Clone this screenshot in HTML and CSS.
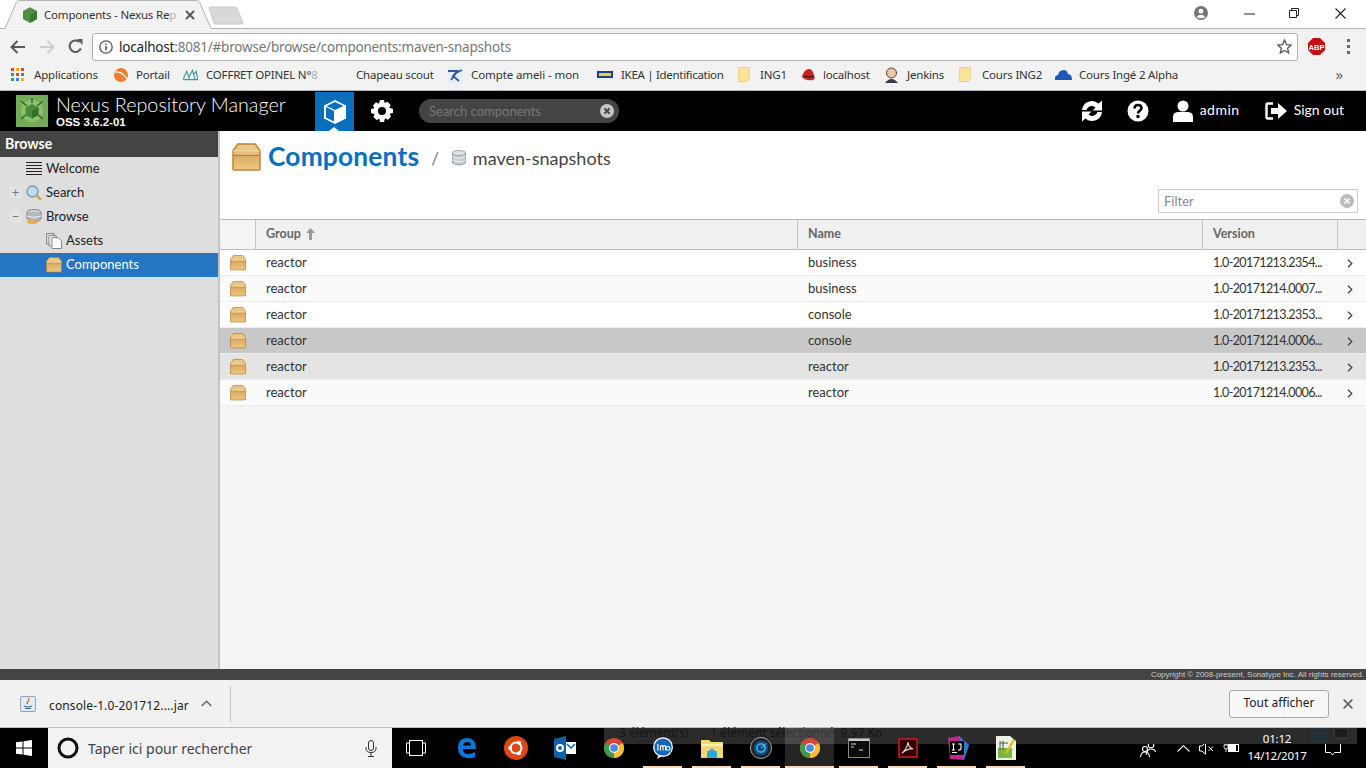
FILE: index.html
```html
<!DOCTYPE html>
<html lang="fr">
<head>
    <meta charset="UTF-8">
    <title>Components - Nexus Repository Manager</title>
    <link rel="stylesheet" href="styles.css">
</head>
<body>
    <svg class="defs" width="0" height="0">
        <defs>
            <linearGradient id="box-body" x1="0" y1="0" x2="0" y2="1">
                <stop offset="0" stop-color="#dcae68"/>
                <stop offset="1" stop-color="#eec57f"/>
            </linearGradient>
            <linearGradient id="box-lid" x1="0" y1="0" x2="0" y2="1">
                <stop offset="0" stop-color="#edcb8e"/>
                <stop offset="1" stop-color="#d9a963"/>
            </linearGradient>
        </defs>
        <symbol id="box" viewBox="0 0 30 30">
            <path d="M1 8 L6 1 H24 L29 8 V27 a1 1 0 0 1 -1 1 H2 a1 1 0 0 1 -1 -1 Z" fill="url(#box-lid)" stroke="#b97f37" stroke-width="1.400"/>
            <path d="M1.500 8 H28.500" stroke="#f3d9a6" stroke-width="1.200"/>
            <path d="M1.500 13 H28.500" stroke="#b97f37" stroke-width="1.500"/>
            <path d="M2 14 H28 V27 H2 Z" fill="url(#box-body)"/>
        </symbol>
        <symbol id="close-dot" viewBox="0 0 16 16">
            <circle cx="8" cy="8" r="8" style="fill: var(--dot, #c8c8c8)"/>
            <path d="M5 5 L11 11 M11 5 L5 11" stroke="currentColor" stroke-width="2.400"/>
        </symbol>
        <symbol id="chrome" viewBox="0 0 24 24">
            <circle cx="12" cy="12" r="11" fill="#db4437"/>
            <path d="M12 12 L21.500 6.500 A11 11 0 0 1 12 23 Z" fill="#fbc02d"/>
            <path d="M12 12 L12 23 A11 11 0 0 1 2.500 6.500 Z" fill="#3f9b4c"/>
            <circle cx="12" cy="12" r="5.400" fill="#fff"/>
            <circle cx="12" cy="12" r="4.200" fill="#4a86e8"/>
        </symbol>
        <symbol id="folder" viewBox="0 0 14 18">
            <path d="M.5 .5 H13.500 V14 L10.500 17.500 H.5 Z" fill="#fce49a" stroke="#efc755"/>
        </symbol>
        <symbol id="chev" viewBox="0 0 6 9">
            <path d="M1 .8 L4.800 4.500 L1 8.200" fill="none" stroke="#444" stroke-width="1.300"/>
        </symbol>
    </svg>

    <div class="tabstrip">
        <svg class="tab-shape" width="250" height="29" viewBox="0 0 250 29">
            <path d="M209 8 Q209 7 210 7 H235 Q236 7 237 8 L243 23 Q243 24 242 24 H215 Q214 24 214 23 Z" fill="#d8d8d8" stroke="#cacaca"/>
            <path d="M0 28.500 H5 L16.500 2 Q17.500 .5 19.500 .5 H196.500 Q198.500 .5 199.500 2 L211 28.500 H250" fill="#f2f2f2" stroke="#b4b4b4"/>
        </svg>
        <div class="tab">
            <svg width="14" height="16" viewBox="0 0 16 18"><path d="M8 0 L16 4.500 V13.500 L8 18 L0 13.500 V4.500 Z" fill="#4f8f3f"/><path d="M8 9 L16 4.500 V13.500 L8 18 Z" fill="#3c7a30"/></svg>
            <span class="tab-title">Components - Nexus Re<span class="fade">p</span></span>
            <svg class="tab-x" width="10" height="10" viewBox="0 0 10 10"><path d="M1 1 L9 9 M9 1 L1 9" stroke="#555" stroke-width="1.800"/></svg>
        </div>
        <div class="win-controls">
            <svg class="win-user" width="14" height="14" viewBox="0 0 14 14"><circle cx="7" cy="7" r="7" fill="#757575"/><circle cx="7" cy="5.200" r="2.400" fill="#fff"/><path d="M2.500 11 Q7 6.500 11.500 11 Q7 13.500 2.500 11" fill="#fff"/></svg>
            <svg class="win-min" width="11" height="11" viewBox="0 0 11 11"><path d="M0 6 H11" stroke="#222"/></svg>
            <svg class="win-max" width="10" height="10" viewBox="0 0 10 10"><path d="M.5 2.500 H7.500 V9.500 H.5 Z M2.500 2.500 V.5 H9.500 V7.500 H7.500" fill="none" stroke="#222"/></svg>
            <svg class="win-close" width="11" height="11" viewBox="0 0 11 11"><path d="M.5 .5 L10.500 10.500 M10.500 .5 L.5 10.500" stroke="#222" stroke-width="1.100"/></svg>
        </div>
    </div>

    <div class="toolbar">
        <svg class="nav" width="16" height="14" viewBox="0 0 16 14"><path d="M15 7 H2 M7.500 1 L1.500 7 L7.500 13" fill="none" stroke="#5a5a5a" stroke-width="2"/></svg>
        <svg class="nav" width="16" height="14" viewBox="0 0 16 14"><path d="M1 7 H14 M8.500 1 L14.500 7 L8.500 13" fill="none" stroke="#cdcdcd" stroke-width="2"/></svg>
        <svg class="nav" width="15" height="15" viewBox="0 0 15 15"><path d="M12.800 9.500 A5.800 5.800 0 1 1 11.500 3" fill="none" stroke="#5a5a5a" stroke-width="2"/><path d="M9 0 H14.500 V6 Z" fill="#5a5a5a"/></svg>
        <div class="omnibox">
            <svg width="14" height="14" viewBox="0 0 14 14"><circle cx="7" cy="7" r="6.200" fill="none" stroke="#555" stroke-width="1.300"/><path d="M7 6 V10.500 M7 3.500 V5" stroke="#555" stroke-width="1.500"/></svg>
            <span class="url"><b>localhost</b>:8081/#browse/browse/components:maven-snapshots</span>
            <svg class="star" width="15" height="15" viewBox="0 0 15 15"><path d="M7.500 1 L9.400 5.600 L14.300 6 L10.600 9.200 L11.700 14 L7.500 11.500 L3.300 14 L4.400 9.200 L.7 6 L5.600 5.600 Z" fill="none" stroke="#555" stroke-width="1.300"/></svg>
        </div>
        <svg class="abp" width="17" height="17" viewBox="0 0 17 17"><path d="M5 0 H12 L17 5 V12 L12 17 H5 L0 12 V5 Z" fill="#c70d0d"/><text x="8.500" y="11.500" text-anchor="middle" class="abp-text">ABP</text></svg>
        <span class="dots"><i></i><i></i><i></i></span>
    </div>

    <div class="bookmarks">
        <span class="apps-grid">
            <i class="r"></i><i class="y"></i><i class="r"></i>
            <i class="b"></i><i class="r"></i><i class="g"></i>
            <i class="g"></i><i class="b"></i><i class="y"></i>
        </span>
        <span class="bm bm-apps">Applications</span>
        <svg width="14" height="14" viewBox="0 0 14 14"><circle cx="7" cy="7" r="7" fill="#ee7d2e"/><path d="M1 4 Q8 3 13 11" fill="none" stroke="#fff" stroke-width="1.300"/></svg>
        <span class="bm bm-portail">Portail</span>
        <svg width="15" height="13" viewBox="0 0 16 13"><path d="M0 12 L4 3 L7 12 M6 10 L10 2 L13 12 M11 7 L14 3 L16 12 M1 12 H16" fill="none" stroke="#3f9a94" stroke-width="1.200"/></svg>
        <span class="bm bm-opinel">COFFRET OPINEL N°<span class="fade">8</span></span>
        <span class="bm bm-scout">Chapeau scout</span>
        <svg width="16" height="16" viewBox="0 0 16 16"><rect width="16" height="16" fill="#e6eef7"/><path d="M1 4 H10 L6 9 L12 14 M4 13 L9 6 L15 3" fill="none" stroke="#2a5f9c" stroke-width="1.800"/></svg>
        <span class="bm bm-ameli">Compte ameli - mon</span>
        <svg width="16" height="7" viewBox="0 0 16 7"><rect width="16" height="7" fill="#1c3f94"/><rect x="2" y="2" width="12" height="3" fill="#f5d21f"/></svg>
        <span class="bm bm-ikea">IKEA | Identification</span>
        <svg width="12" height="15" viewBox="0 0 14 18"><use href="#folder"/></svg>
        <span class="bm bm-ing1">ING1</span>
        <svg width="15" height="14" viewBox="0 0 15 14"><path d="M1 9 Q3 1 8 1 Q12 1 13 8 Q15 10 12 12 Q5 13 1 9" fill="#cc1f1f"/><path d="M3 8 Q8 10 13 8" stroke="#111" fill="none"/></svg>
        <span class="bm bm-local">localhost</span>
        <svg width="15" height="16" viewBox="0 0 15 16"><circle cx="7.500" cy="6" r="5" fill="#e8c8a8" stroke="#5a4030"/><path d="M1 16 Q7.500 8 14 16 Z" fill="#3a3a4a"/></svg>
        <span class="bm bm-jenkins">Jenkins</span>
        <svg width="12" height="15" viewBox="0 0 14 18"><use href="#folder"/></svg>
        <span class="bm bm-ing2">Cours ING2</span>
        <svg width="17" height="11" viewBox="0 0 17 11"><path d="M0 11 Q-1 7 3 6 Q4 1 9 1 Q12 1 13 5 Q17 5 17 11 Z" fill="#1d58b8"/></svg>
        <span class="bm bm-alpha">Cours Ingé 2 Alpha</span>
        <span class="more">»</span>
    </div>

    <header class="app-header">
        <div class="logo">
            <svg width="32" height="32" viewBox="0 0 32 32"><rect width="32" height="32" fill="#74ad58"/><circle cx="16" cy="16" r="11" fill="#8cc06f"/><path d="M5 6 L11 11 M27 6 L21 11 M5 24 L10 20 M27 24 L22 20 M16 3 V8" stroke="#3f5a36" stroke-width="1.300"/><path d="M16 9 L22.500 12.500 V20 L16 23.500 L9.500 20 V12.500 Z" fill="#4a8a3a"/><path d="M16 16 L22.500 12.500 V20 L16 23.500 Z" fill="#336d2a"/></svg>
        </div>
        <div class="brand">
            <div class="brand-name">Nexus Repository Manager</div>
            <div class="brand-version">OSS 3.6.2-01</div>
        </div>
        <div class="mode-browse">
            <svg width="24" height="26" viewBox="0 0 24 26"><path d="M12 1 L23 6.500 V19.500 L12 25 L1 19.500 V6.500 Z" fill="#fff"/><path d="M3 8 L11 12 V22.500 L3 18.500 Z" fill="#0a6ebd"/><path d="M12 3 L20.500 7 L12 11 L3.500 7 Z" fill="#0a6ebd"/></svg>
            <span class="caret"></span>
        </div>
        <svg class="gear" width="22" height="22" viewBox="0 0 22 22"><path d="M9 0 H13 L13.700 3 L16.500 1.800 L19.700 5 L18.300 7.700 L22 9 V13 L18.700 13.700 L20 16.500 L17 19.700 L14 18.300 L13 22 H9 L8.300 18.700 L5.500 20 L2.300 17 L3.700 14.300 L0 13 V9 L3.300 8.300 L2 5.500 L5 2.300 L8 3.700 Z" fill="#fff"/><circle cx="11" cy="11" r="4" fill="#000"/></svg>
        <div class="app-search">
            <span>Search components</span>
            <svg width="14" height="14"><use href="#close-dot"/></svg>
        </div>
        <div class="header-right">
            <svg width="22" height="22" viewBox="0 0 22 22"><path d="M1 10 A10 10 0 0 1 17.500 3.500 L21 0.500 V10.500 H11.500 L14.500 7.500 A5.500 5.500 0 0 0 5.500 10 Z M21 12 A10 10 0 0 1 4.500 18.500 L1 21.500 V11.500 H10.500 L7.500 14.500 A5.500 5.500 0 0 0 16.500 12 Z" fill="#fff"/></svg>
            <svg class="help" width="22" height="22" viewBox="0 0 22 22"><circle cx="11" cy="11" r="10.500" fill="#fff"/><path d="M7.500 8.500 Q7.500 5 11 5 Q14.500 5 14.500 8 Q14.500 10 12.500 11 Q11 12 11 13.500" fill="none" stroke="#000" stroke-width="2.600"/><rect x="9.500" y="15" width="3" height="3" fill="#000"/></svg>
            <svg class="user" width="20" height="22" viewBox="0 0 20 22"><circle cx="10" cy="6" r="5.500" fill="#fff"/><path d="M0 22 V17 Q0 12 6 12 H14 Q20 12 20 17 V22 Z" fill="#fff"/></svg>
            <span class="admin">admin</span>
            <svg class="signout" width="22" height="18" viewBox="0 0 22 18"><path d="M8 1.500 H3 Q1.500 1.500 1.500 3 V15 Q1.500 16.500 3 16.500 H8" fill="none" stroke="#fff" stroke-width="2.400"/><path d="M6 6 H13 V1 L22 9 L13 17 V12 H6 Z" fill="#fff"/></svg>
            <span class="signout-text">Sign out</span>
        </div>
    </header>

    <div class="app-body">
        <aside class="sidebar">
            <div class="side-title">Browse</div>
            <div class="tree-row">
                <svg class="tree-ico" width="16" height="16" viewBox="0 0 16 16"><path d="M0 1.500 H16 M0 4.500 H16 M0 7.500 H16 M0 10.500 H16 M0 13.500 H16" stroke="#222"/></svg>
                <span>Welcome</span>
            </div>
            <div class="tree-row">
                <span class="expander">+</span>
                <svg class="tree-ico" width="16" height="16" viewBox="0 0 16 16"><circle cx="6.500" cy="6.500" r="5.500" fill="#bcdcf2" stroke="#7d93a6" stroke-width="1.300"/><path d="M10.500 10.500 L15 15" stroke="#d9a441" stroke-width="2.500"/></svg>
                <span>Search</span>
            </div>
            <div class="tree-row">
                <span class="expander">−</span>
                <svg class="tree-ico" width="16" height="16" viewBox="0 0 16 16"><ellipse cx="8" cy="3" rx="7" ry="2.500" fill="#cfd3d6" stroke="#888"/><path d="M1 3 V10 Q8 14 15 10 V3" fill="#b4b9bd" stroke="#888"/><path d="M1 7 Q8 10 15 7" fill="none" stroke="#eee"/><path d="M0 13 Q5 9 10 12 L15 11 Q10 16 4 15 Z" fill="#e5ad4b"/></svg>
                <span>Browse</span>
            </div>
            <div class="tree-row child">
                <svg class="tree-ico" width="16" height="16" viewBox="0 0 16 16"><path d="M.5 .5 H8 V11 H.5 Z" fill="#ddd" stroke="#888"/><path d="M3 2.500 H10 V13 H3 Z" fill="#eee" stroke="#888"/><path d="M6 4.500 H12 L15.500 8 V15.500 H6 Z" fill="#fff" stroke="#888"/></svg>
                <span>Assets</span>
            </div>
            <div class="tree-row child selected">
                <svg class="tree-ico" width="16" height="16"><use href="#box"/></svg>
                <span>Components</span>
            </div>
        </aside>
        <main class="content">
            <div class="content-head">
                <div class="crumb">
                    <svg class="crumb-box" width="29" height="29"><use href="#box"/></svg>
                    <h1>Components</h1>
                    <span class="slash">/</span>
                    <svg class="crumb-db" width="14" height="16" viewBox="0 0 14 16"><path d="M.5 3 V13 Q7 17 13.500 13 V3" fill="#c3cbd1" stroke="#9aa3aa"/><ellipse cx="7" cy="3" rx="6.500" ry="2.500" fill="#dfe4e7" stroke="#9aa3aa"/><path d="M.5 6.500 Q7 10 13.500 6.500 M.5 10 Q7 13.500 13.500 10" fill="none" stroke="#f2f4f5"/></svg>
                    <span class="repo">maven-snapshots</span>
                </div>
                <div class="filter-line">
                    <div class="filter">
                        <span>Filter</span>
                        <svg width="14" height="14"><use href="#close-dot"/></svg>
                    </div>
                </div>
            </div>
            <div class="grid-head">
                <div></div>
                <div>Group <svg width="9" height="12" viewBox="0 0 9 12"><path d="M4.500 0 L9 5 H6 V12 H3 V5 H0 Z" fill="#999"/></svg></div>
                <div>Name</div>
                <div>Version</div>
                <div></div>
            </div>
            <div class="grid-row">
                <svg class="row-box" width="16" height="16"><use href="#box"/></svg>
                <span>reactor</span><span>business</span><span class="ver">1.0-20171213.2354...</span><svg class="chev" width="6" height="9"><use href="#chev"/></svg>
            </div>
            <div class="grid-row alt">
                <svg class="row-box" width="16" height="16"><use href="#box"/></svg>
                <span>reactor</span><span>business</span><span class="ver">1.0-20171214.0007...</span><svg class="chev" width="6" height="9"><use href="#chev"/></svg>
            </div>
            <div class="grid-row">
                <svg class="row-box" width="16" height="16"><use href="#box"/></svg>
                <span>reactor</span><span>console</span><span class="ver">1.0-20171213.2353...</span><svg class="chev" width="6" height="9"><use href="#chev"/></svg>
            </div>
            <div class="grid-row active">
                <svg class="row-box" width="16" height="16"><use href="#box"/></svg>
                <span>reactor</span><span>console</span><span class="ver">1.0-20171214.0006...</span><svg class="chev" width="6" height="9"><use href="#chev"/></svg>
            </div>
            <div class="grid-row hover">
                <svg class="row-box" width="16" height="16"><use href="#box"/></svg>
                <span>reactor</span><span>reactor</span><span class="ver">1.0-20171213.2353...</span><svg class="chev" width="6" height="9"><use href="#chev"/></svg>
            </div>
            <div class="grid-row alt">
                <svg class="row-box" width="16" height="16"><use href="#box"/></svg>
                <span>reactor</span><span>reactor</span><span class="ver">1.0-20171214.0006...</span><svg class="chev" width="6" height="9"><use href="#chev"/></svg>
            </div>
        </main>
    </div>

    <div class="app-footer">Copyright © 2008-present, Sonatype Inc. All rights reserved.</div>

    <div class="downloads">
        <div class="dl-item">
            <svg width="16" height="16" viewBox="0 0 16 16"><rect x=".5" y=".5" width="15" height="15" rx="1" fill="#e4ebf5" stroke="#8fa3bd"/><path d="M8 2 Q10 4 7.500 6 Q6.500 7 8 8" fill="none" stroke="#d9661f" stroke-width="1.300"/><path d="M4 10 Q8 12 12 10 M5 12.500 H11" fill="none" stroke="#3d6a9e" stroke-width="1.200"/></svg>
            <span class="dl-name">console-1.0-201712....jar</span>
            <svg width="11" height="7" viewBox="0 0 11 7"><path d="M.7 6 L5.500 1.300 L10.300 6" fill="none" stroke="#666" stroke-width="1.600"/></svg>
        </div>
        <button class="show-all">Tout afficher</button>
        <svg class="dl-close" width="10" height="10" viewBox="0 0 10 10"><path d="M.7 .7 L9.300 9.300 M9.300 .7 L.7 9.300" stroke="#666" stroke-width="1.800"/></svg>
    </div>

    <div class="taskbar">
        <div class="explorer-strip">
            <span>3 élément(s)</span><span>1 élément sélectionné  9,97 Ko</span>
            <svg class="strip-views" width="38" height="16" viewBox="0 0 38 16"><path d="M1 1 H6 M8 1 H19 M1 5 H6 M8 5 H19 M1 9 H6 M8 9 H19 M1 13 H6 M8 13 H19" stroke="#1e3a4a" stroke-width="1.500"/><rect x="24" y="0" width="14" height="10" fill="#1c1c1c" stroke="#444"/></svg>
        </div>
        <div class="start">
            <svg width="16" height="16" viewBox="0 0 16 16"><path d="M0 2.300 L6.500 1.400 V7.500 H0 Z M7.500 1.200 L16 0 V7.500 H7.500 Z M0 8.500 H6.500 V14.600 L0 13.700 Z M7.500 8.500 H16 V16 L7.500 14.800 Z" fill="#fff"/></svg>
        </div>
        <div class="cortana">
            <svg width="22" height="22" viewBox="0 0 22 22"><circle cx="11" cy="11" r="9" fill="none" stroke="#111" stroke-width="3"/></svg>
            <span>Taper ici pour rechercher</span>
            <svg class="mic" width="12" height="17" viewBox="0 0 12 17"><rect x="3.500" y=".5" width="5" height="10" rx="2.500" fill="none" stroke="#333"/><path d="M1 7 V8.500 Q1 12.500 6 12.500 Q11 12.500 11 8.500 V7 M6 12.500 V16 M3 16.500 H9" fill="none" stroke="#333"/></svg>
        </div>
        <div class="task-icons">
            <div class="task task-view"><svg width="20" height="16" viewBox="0 0 20 16"><path d="M.5 3 H3 M.5 13 H3 M17 3 H19.500 M17 13 H19.500 M.5 3 V13 M19.500 3 V13" stroke="#fff" fill="none"/><rect x="3.500" y=".5" width="13" height="15" fill="none" stroke="#fff"/></svg></div>
            <div class="task"><svg width="20" height="22" viewBox="0 0 20 22"><path d="M1 11 Q1 1 10 1 Q19 1 19 12 H6 Q6 17 11 17 Q15 17 18 15 V20 Q14 22 10 21 Q1 20 1 11 Z M6 8.500 H14 Q14 5 10 5 Q7 5 6 8.500 Z" fill="#0a78d7"/></svg></div>
            <div class="task"><svg width="24" height="24" viewBox="0 0 24 24"><circle cx="12" cy="12" r="12" fill="#dd4814"/><circle cx="12" cy="12" r="5.500" fill="none" stroke="#fff" stroke-width="2"/><circle cx="6" cy="12" r="2" fill="#fff"/><circle cx="15" cy="6.800" r="2" fill="#fff"/><circle cx="15" cy="17.200" r="2" fill="#fff"/></svg></div>
            <div class="task"><svg width="22" height="24" viewBox="0 0 22 24"><path d="M0 3 L12 0 V24 L0 21 Z" fill="#0a64ad"/><rect x="12" y="6" width="10" height="12" fill="#fff"/><path d="M13 8 L17 12 L21 8" fill="none" stroke="#0a64ad" stroke-width="1.500"/><circle cx="6" cy="12" r="3" fill="none" stroke="#fff" stroke-width="2"/></svg></div>
            <div class="task"><svg width="22" height="22"><use href="#chrome"/></svg></div>
            <div class="task run"><svg width="22" height="22" viewBox="0 0 24 26"><circle cx="12" cy="12" r="11" fill="#1565b8" stroke="#fff" stroke-width="1.500"/><path d="M7 21 L5 26 L12 22 Z" fill="#fff"/><path d="M6 8 V16 M9 16 V11 Q11 9.500 12 11 V16 M12 11 Q14 9.500 15 11 V16" fill="none" stroke="#fff" stroke-width="1.300"/><circle cx="18" cy="13.500" r="2.200" fill="none" stroke="#fff" stroke-width="1.300"/></svg></div>
            <div class="task run"><svg width="22" height="20" viewBox="0 0 22 20"><path d="M0 2 H8 L10 4 H22 V20 H0 Z" fill="#f7d774"/><path d="M0 6 H22 V8 H0 Z" fill="#fff2bf"/><path d="M6 20 V13 H8 L11 10 L14 13 H16 V20 Z" fill="#2fa5d8"/></svg></div>
            <div class="task run"><svg width="22" height="22" viewBox="0 0 24 24"><circle cx="12" cy="12" r="11.500" fill="#222" stroke="#9fb2c2"/><circle cx="12" cy="12" r="8" fill="#0f4d80"/><circle cx="12" cy="12" r="4.500" fill="none" stroke="#39a6e6" stroke-width="2"/><path d="M12 12 L18 7" stroke="#8ed0f5"/></svg></div>
            <div class="task run current"><svg width="22" height="22"><use href="#chrome"/></svg></div>
            <div class="task run"><svg width="22" height="20" viewBox="0 0 22 20"><rect x=".5" y=".5" width="21" height="19" fill="#0c0c0c" stroke="#8a8a8a"/><rect x="1" y="1" width="20" height="2" fill="#ccc"/><path d="M3 6 H8 M3 9 H6 M11 12 H15" stroke="#ddd"/></svg></div>
            <div class="task run"><svg width="20" height="20" viewBox="0 0 20 20"><rect x="1" y="1" width="18" height="18" fill="#2b0505" stroke="#c91a12" stroke-width="1.600"/><path d="M4 15 Q9 11 10 4 Q10 9 15 11 Q10 10 4 15" fill="none" stroke="#f0d0d0" stroke-width="1.200"/></svg></div>
            <div class="task run"><svg width="24" height="24" viewBox="0 0 24 24"><path d="M3 2 L14 0 L24 9 L19 24 L5 23 Z" fill="#c2268b"/><path d="M14 0 L24 9 L19 24 L15 12 Z" fill="#2a7ad4"/><rect x="5" y="5" width="14" height="14" fill="#000"/><path d="M7 8 H10 M8.500 8 V14 M7 14 H10 M13 8 H16 V13 Q16 14 13 14 M7 16.500 H12" fill="none" stroke="#fff" stroke-width="1.100"/></svg></div>
            <div class="task run"><svg width="20" height="24" viewBox="0 0 20 24"><path d="M0 0 H14 L20 5 V24 H0 Z" fill="#eaf3df"/><rect x="2" y="12" width="14" height="10" fill="#7ab648"/><path d="M4 5 V14 M7 5 V14 M4 7 H12" stroke="#555"/><path d="M9 17 L17 3 L19 4 L11 18 Z" fill="#e8b820"/></svg></div>
        </div>
        <div class="tray">
            <svg class="tray-people" width="16" height="16" viewBox="0 0 16 16"><circle cx="11" cy="4" r="2.800" fill="none" stroke="#fff" stroke-width="1.100"/><path d="M6 14 Q7 8 11 8 Q15 8 15.500 11" fill="none" stroke="#fff" stroke-width="1.100"/><circle cx="5" cy="8" r="2.500" fill="#000" stroke="#fff" stroke-width="1.100"/><path d="M.5 16 Q1 11 5 11 Q9 11 9.500 16" fill="none" stroke="#fff" stroke-width="1.100"/></svg>
            <svg class="tray-up" width="13" height="7" viewBox="0 0 13 7"><path d="M.5 6.500 L6.500 .7 L12.500 6.500" fill="none" stroke="#fff" stroke-width="1.100"/></svg>
            <svg class="tray-vol" width="15" height="13" viewBox="0 0 15 13"><path d="M.5 4 H3 L6.500 .7 V12.300 L3 9 H.5 Z" fill="none" stroke="#fff"/><path d="M9.500 4.500 L14 9 M14 4.500 L9.500 9" stroke="#fff"/></svg>
            <svg class="tray-bat" width="16" height="12" viewBox="0 0 16 12"><path d="M2 0 V3 M4 0 V3 M1 3 H5 V5 Q5 7 3 7 Q1 7 1 5 Z M3 7 V10" fill="none" stroke="#fff" stroke-width=".9"/><rect x="5.500" y="2.500" width="10" height="7" fill="#000" stroke="#fff"/><rect x="6" y="3" width="7" height="6" fill="#fff"/></svg>
            <div class="clock"><div>01:12</div><div>14/12/2017</div></div>
            <svg class="tray-msg" width="16" height="16" viewBox="0 0 16 16"><path d="M.5 .5 H15.500 V12.500 H9.500 L7.500 15 L5.500 12.500 H.5 Z" fill="none" stroke="#fff"/></svg>
        </div>
    </div>
</body>
</html>
```
FILE: styles.css
```css
* {
    box-sizing: border-box;
}
html, body {
    margin: 0;
    padding: 0;
    height: 768px;
    overflow: hidden;
}
body {
    width: 1366px;
    display: flex;
    flex-direction: column;
    font-family: "Lato", "Liberation Sans", sans-serif;
    background-color: #f4f4f4;
    color: #333;
}
svg {
    flex: none;
    display: block;
}
.defs {
    position: absolute;
}
.fade {
    opacity: 0.35;
}

/* browser chrome */
.tabstrip {
    position: relative;
    height: 29px;
    flex: none;
    background-color: #fff;
    display: flex;
    font-family: "Noto Sans", sans-serif;
}
.tab-shape {
    position: absolute;
    left: 0;
    top: 0;
}
.tabstrip::after {
    content: "";
    position: absolute;
    left: 250px;
    right: 0;
    top: 28px;
    height: 1px;
    background-color: #b8b8b8;
}
.tab {
    position: relative;
    display: flex;
    align-items: center;
    width: 172px;
    height: 29px;
    margin-left: 23px;
    font-size: 11.500px;
    letter-spacing: -0.2px;
    color: #333;
}
.tab-title {
    margin-left: 7px;
    white-space: nowrap;
}
.tab-x {
    margin-left: auto;
}
.win-controls {
    position: relative;
    margin-left: auto;
    display: flex;
    align-items: center;
    height: 26px;
}
.win-user {
    margin-right: 36px;
}
.win-min {
    margin-right: 34px;
}
.win-max {
    margin-right: 36px;
}
.win-close {
    margin-right: 20px;
}
.toolbar {
    height: 33px;
    flex: none;
    background-color: #f2f2f2;
    display: flex;
    align-items: center;
    padding: 2px 0 0 10px;
}
.nav {
    margin-right: 13px;
}
.omnibox {
    width: 1206px;
    height: 28px;
    margin-left: -4px;
    background-color: #fff;
    border: 1px solid #b0b0b0;
    border-radius: 3px;
    display: flex;
    align-items: center;
    padding: 0 5px 0 6px;
}
.url {
    margin-left: 6px;
    font-family: "Noto Sans", sans-serif;
    font-size: 13.500px;
    letter-spacing: -0.2px;
    color: #777;
}
.url b {
    font-weight: normal;
    color: #222;
}
.star {
    margin-left: auto;
}
.abp {
    margin-left: 10px;
}
.abp-text {
    font: bold 7.500px "Liberation Sans", sans-serif;
    fill: #fff;
}
.dots {
    margin-left: 22px;
    display: flex;
    flex-direction: column;
    gap: 3px;
}
.dots i {
    display: block;
    width: 3px;
    height: 3px;
    background-color: #666;
}
.bookmarks {
    height: 29px;
    flex: none;
    background-color: #f2f2f2;
    border-bottom: 1px solid #b8b8b8;
    display: flex;
    align-items: center;
    padding: 0 0 3px 11px;
    font-family: "Noto Sans", sans-serif;
    font-size: 11.500px;
    letter-spacing: -0.2px;
    color: #333;
    white-space: nowrap;
}
.apps-grid {
    display: grid;
    grid-template-columns: repeat(3, 3px);
    grid-auto-rows: 3px;
    gap: 2px;
}
.apps-grid i {
    display: block;
}
.apps-grid .r { background-color: #e0453a; }
.apps-grid .y { background-color: #f4b400; }
.apps-grid .g { background-color: #2da14f; }
.apps-grid .b { background-color: #3f7fe8; }
.bm {
    display: block;
    flex: none;
}
.bm-apps { margin: 0 15px 0 10px; width: 65px; }
.bm-portail { margin: 0 13px 0 8px; width: 34px; }
.bm-opinel { margin: 0 32px 0 8px; width: 118px; }
.bm-scout { margin: 0 12px 0 0; width: 79px; }
.bm-ameli { margin: 0 16px 0 8px; width: 110px; letter-spacing: -0.1px; }
.bm-ikea { margin: 0 14px 0 8px; width: 103px; letter-spacing: -0.3px; }
.bm-ing1 { margin: 0 14px 0 10px; width: 27px; }
.bm-local { margin: 0 13px 0 7px; width: 48px; }
.bm-jenkins { margin: 0 14px 0 8px; width: 38px; }
.bm-ing2 { margin: 0 12px 0 11px; width: 61px; }
.bm-alpha { margin: 0 0 0 7px; }
.more {
    margin-left: auto;
    margin-right: 23px;
    font-size: 15px;
    line-height: 15px;
    color: #666;
}

/* nexus header */
.app-header {
    height: 40px;
    flex: none;
    background-color: #000;
    display: flex;
    align-items: center;
    padding-left: 16px;
    color: #fff;
}
.brand {
    margin-left: 8px;
    width: 259px;
    padding-top: 2px;
}
.brand-name {
    font-size: 19.800px;
    font-weight: 300;
    line-height: 20px;
    white-space: nowrap;
}
.brand-version {
    font-size: 11.500px;
    font-weight: 700;
    line-height: 16px;
    font-family: "Liberation Sans", sans-serif;
}
.mode-browse {
    position: relative;
    width: 39px;
    height: 39px;
    margin-top: 1px;
    background-color: #0a6ebd;
    display: flex;
    align-items: center;
    justify-content: center;
}
.caret {
    position: absolute;
    left: 14px;
    bottom: 0;
    border-left: 5px solid transparent;
    border-right: 5px solid transparent;
    border-bottom: 4px solid #fff;
}
.gear {
    margin-left: 17px;
}
.app-search {
    width: 200px;
    height: 24px;
    margin-left: 26px;
    background-color: #444;
    border-radius: 12px;
    display: flex;
    align-items: center;
    justify-content: space-between;
    padding: 0 5px 0 10px;
    font-size: 13px;
    color: #777;
}
.app-search svg {
    color: #444;
}
.header-right {
    margin-left: auto;
    display: flex;
    align-items: center;
    padding-right: 22px;
    font-size: 14px;
}
.help {
    margin-left: 24px;
}
.user {
    margin-left: 24px;
}
.admin {
    margin: 0 0 4px 7px;
    font-size: 14px;
    letter-spacing: 0.5px;
}
.signout {
    margin-left: 25px;
}
.signout-text {
    margin: 0 0 4px 7px;
}

/* main area */
.app-body {
    flex: 1;
    min-height: 0;
    display: flex;
}
.sidebar {
    width: 220px;
    flex: none;
    background-color: #dedede;
    border-right: 2px solid #c4c4c4;
}
.side-title {
    height: 26px;
    background-color: #444;
    color: #fff;
    font-weight: 700;
    font-size: 14.200px;
    line-height: 26px;
    padding-left: 5px;
}
.tree-row {
    height: 24px;
    display: flex;
    align-items: center;
    padding-left: 26px;
    font-size: 13px;
    color: #222;
    position: relative;
}
.tree-row span {
    margin-bottom: 2px;
}
.tree-ico {
    margin-right: 4px;
}
.tree-row.child {
    padding-left: 46px;
}
.tree-row.selected {
    background-color: #2475c2;
    color: #fff;
}
.expander {
    position: absolute;
    left: 10px;
    width: 11px;
    height: 11px;
    line-height: 11px;
    text-align: center;
    font-size: 13px;
    color: #777;
    background-color: #e4e4e4;
}
.content {
    flex: 1;
    min-width: 0;
}
.content-head {
    height: 88px;
    background-color: #fff;
    padding: 11px 8px 0 12px;
}
.crumb {
    display: flex;
    align-items: center;
    height: 30px;
}
.crumb h1 {
    margin: 0 0 2px 7px;
    font-size: 26.300px;
    font-weight: 700;
    color: #0a6ebd;
    font-family: "Lato", sans-serif;
    letter-spacing: 0.2px;
}
.slash {
    margin-left: 12px;
    font-size: 17px;
    color: #777;
    padding-top: 3px;
}
.crumb-db {
    margin: 2px 0 0 13px;
}
.repo {
    margin-left: 7px;
    padding-top: 2px;
    font-size: 18px;
    color: #444;
}
.filter-line {
    display: flex;
    justify-content: flex-end;
    margin-top: 17px;
}
.filter {
    width: 200px;
    height: 24px;
    border: 1px solid #ccc;
    background-color: #fff;
    display: flex;
    align-items: center;
    justify-content: space-between;
    padding: 0 3px 0 5px;
    font-size: 13px;
    color: #888;
}
.filter svg {
    --dot: #bbb;
    color: #f2f2f2;
}
.grid-head,
.grid-row {
    display: grid;
    grid-template-columns: 36px 542px 405px 135px 28px;
    align-items: center;
}
.grid-head {
    height: 31px;
    align-items: stretch;
    background-color: #f0f0f0;
    border-top: 1px solid #bbb;
    border-bottom: 1px solid #bbb;
    font-size: 12.500px;
    font-weight: 700;
    color: #666;
}
.grid-head div {
    display: flex;
    align-items: center;
    gap: 5px;
    padding: 0 0 2px 10px;
    border-right: 1px solid #c4c4c4;
}
.grid-head div:first-child {
    background-color: #f4f4f4;
}
.grid-head div:last-child {
    border-right: 0;
}
.grid-row {
    height: 26px;
    background-color: #fff;
    border-bottom: 1px solid #ededed;
    font-size: 13px;
    color: #333;
}
.grid-row span {
    padding: 0 0 2px 10px;
    white-space: nowrap;
}
.grid-row .ver {
    padding-bottom: 0;
    font-size: 12.500px;
    letter-spacing: -0.6px;
}
.row-box {
    margin: 1px 0 0 10px;
}
.chev {
    margin: 1px 0 0 9px;
}
.grid-row.alt {
    background-color: #fafafa;
}
.grid-row.active {
    background-color: #c8c8c8;
}
.grid-row.hover {
    background-color: #e4e4e4;
}
.app-footer {
    height: 11px;
    flex: none;
    background-color: #444;
    color: #ccc;
    font-size: 8px;
    line-height: 11px;
    text-align: right;
    padding-right: 2px;
    font-family: "Liberation Sans", sans-serif;
}

/* download shelf */
.downloads {
    height: 48px;
    flex: none;
    background-color: #f1f1f1;
    border-bottom: 1px solid #c0c0c0;
    display: flex;
    align-items: center;
    font-family: "Noto Sans", sans-serif;
}
.dl-item {
    width: 231px;
    height: 36px;
    display: flex;
    align-items: center;
    padding-left: 20px;
    border-right: 1px solid #c4c4c4;
    font-size: 12px;
    color: #222;
}
.dl-name {
    margin: 3px 12px 0 13px;
    letter-spacing: 0.12px;
}
.show-all {
    margin-left: auto;
    width: 100px;
    height: 28px;
    background-color: #f8f8f8;
    border: 1px solid #aaa;
    border-radius: 3px;
    font: 12px "Noto Sans", sans-serif;
    color: #222;
    padding: 0 0 2px;
}
.dl-close {
    margin: 0 13px 0 14px;
}

/* windows taskbar */
.taskbar {
    position: relative;
    height: 40px;
    flex: none;
    background-color: #000;
    display: flex;
    font-family: "Noto Sans", sans-serif;
    color: #fff;
}
.explorer-strip {
    position: absolute;
    left: 604px;
    top: 0;
    width: 753px;
    height: 16px;
    background-color: #2b2b2b;
    display: flex;
    gap: 22px;
    padding-left: 15px;
    font-size: 12px;
    line-height: 10px;
    color: #151515;
    white-space: pre;
}
.strip-views {
    margin-left: auto;
    margin-right: 9px;
}
.start {
    width: 48px;
    display: flex;
    align-items: center;
    justify-content: center;
}
.cortana {
    width: 344px;
    background-color: #f2f2f2;
    color: #444;
    display: flex;
    align-items: center;
    padding: 0 15px 0 9px;
    font-size: 14px;
}
.cortana span {
    margin-left: 9px;
}
.mic {
    margin-left: auto;
}
.task-icons {
    position: relative;
    display: flex;
}
.task {
    width: 49px;
    display: flex;
    align-items: center;
    justify-content: center;
    position: relative;
}
.task-view {
    width: 50px;
    padding-right: 2px;
}
.task.run::after {
    content: "";
    position: absolute;
    left: 5px;
    right: 5px;
    bottom: 0;
    height: 2px;
    background-color: #ffd9b3;
}
.task.current {
    background-color: rgba(255, 255, 255, 0.14);
}
.task.current::after {
    left: 0;
    right: 0;
}
.tray {
    margin-left: auto;
    display: flex;
    align-items: center;
    padding-right: 25px;
}
.tray-people { margin-right: 21px; margin-top: 2px; }
.tray-up { margin-right: 9px; }
.tray-vol { margin-right: 9px; }
.tray-bat { margin-right: 3px; }
.clock {
    width: 70px;
    text-align: center;
    font-size: 11.500px;
    letter-spacing: -0.2px;
    line-height: 17px;
    margin-right: 13px;
    position: relative;
    top: -1px;
}
```
